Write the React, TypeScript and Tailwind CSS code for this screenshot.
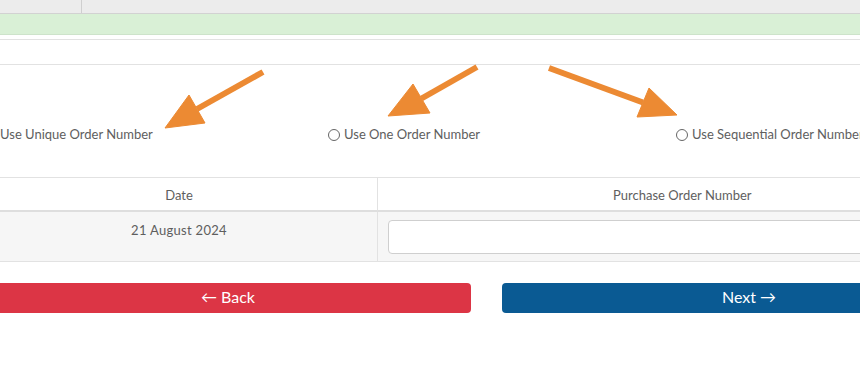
function Arrows() {
  // orange callout arrows drawn over the form
  const arrows = [
    { x1: 263, y1: 72, tip: [165, 128], a: [189, 95], b: [205, 123] },
    { x1: 477, y1: 67, tip: [388, 116], a: [413, 84], b: [430, 113] },
    { x1: 549, y1: 68, tip: [677, 115], a: [649, 88], b: [637, 117] },
  ];
  return (
    <svg className="absolute left-0 top-0 pointer-events-none" width="860" height="373">
      {arrows.map((r, i) => {
        const mx = (r.a[0] + r.b[0]) / 2;
        const my = (r.a[1] + r.b[1]) / 2;
        return (
          <g key={i} fill="#ec8a33" stroke="#ec8a33">
            <line x1={r.x1} y1={r.y1} x2={mx} y2={my} strokeWidth="6" />
            <polygon points={`${r.tip[0]},${r.tip[1]} ${r.a[0]},${r.a[1]} ${r.b[0]},${r.b[1]}`} strokeWidth="1" strokeLinejoin="round" />
          </g>
        );
      })}
    </svg>
  );
}

function Radio({ label, width }: { label: string; width: string }) {
  return (
    <label className={`flex items-center gap-[4px] shrink-0 ${width}`}>
      <span className="w-[12px] h-[12px] rounded-full border border-[#666] bg-white" />
      <span>{label}</span>
    </label>
  );
}

export default function App() {
  return (
    <div
      className="relative w-[860px] h-[373px] overflow-hidden bg-white text-[13px] text-[#5e5e5e]"
      style={{ fontFamily: "Lato, 'Noto Sans', sans-serif" }}
    >
      <div className="w-[1020px] -ml-[19px]">
        {/* top tabs */}
        <div className="flex h-[14px] bg-[#ececec] border-b border-[#d2d2d2]">
          <div className="w-[101px] border-r border-[#cfcfcf]" />
        </div>
        <div className="h-[21px] bg-[#d9f0d6] border-b border-[#cde3ca]" />
        <div className="h-[4px]" />
        <div className="h-[26px] border-t border-b border-[#e2e2e2]" />

        {/* order number options */}
        <div className="flex items-center h-[113px] border-b border-[#e2e2e2] pl-[3px] pt-[28px]">
          <Radio label="Use Unique Order Number" width="w-[344px]" />
          <Radio label="Use One Order Number" width="w-[348px]" />
          <Radio label="Use Sequential Order Number" width="w-[300px]" />
        </div>

        {/* table */}
        <div className="grid grid-cols-[397px_1fr]">
          <div className="h-[34px] flex items-center justify-center pt-[3px] border-r border-[#e2e2e2] border-b-2 border-b-[#dedede]">Date</div>
          <div className="h-[34px] flex items-center justify-start pt-[3px] pl-[235px] border-b-2 border-b-[#dedede]">Purchase Order Number</div>
          <div className="h-[50px] bg-[#f6f6f6] border-r border-[#e2e2e2] border-b border-b-[#e2e2e2] text-center pt-[9px] tracking-[0.3px]">21 August 2024</div>
          <div className="h-[50px] bg-[#f6f6f6] border-b border-b-[#e2e2e2] pl-[10px] pt-[8px]">
            <input className="w-[600px] h-[34px] rounded-[4px] border border-[#cfcfcf] bg-white outline-none" />
          </div>
        </div>

        {/* nav buttons */}
        <div className="flex gap-[31px] mt-[21px] pl-[4px]">
          <button className="w-[486px] h-[30px] rounded-[4px] bg-[#dc3545] text-white text-[16px] flex items-center justify-center pb-[2px]">
            ← Back
          </button>
          <button className="w-[494px] h-[30px] rounded-[4px] bg-[#0a5a93] text-white text-[16px] flex items-center justify-center pb-[2px]">
            Next →
          </button>
        </div>
      </div>
      <Arrows />
    </div>
  );
}
